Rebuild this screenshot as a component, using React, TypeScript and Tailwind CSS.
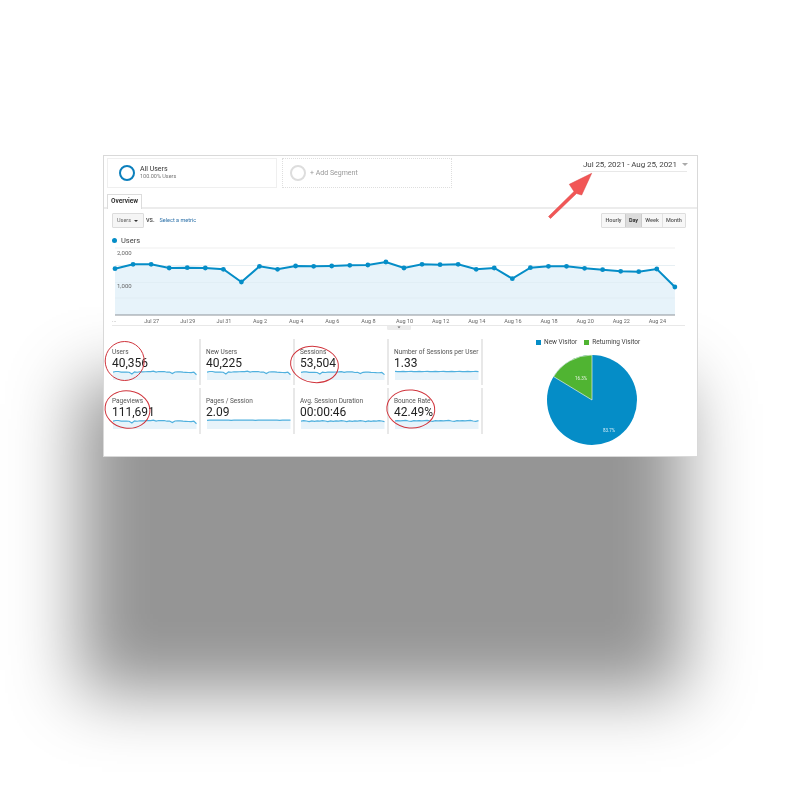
const ys = [268.7,264.3,264.3,268,267.7,268,269.3,282,266.3,269.3,266,266.3,266,265.3,265,262,268,264.3,264.7,264.3,269.3,268,278.7,267.7,266.3,266.3,268.3,269.7,271.3,271.7,269,287];
const xs = ys.map((_, i) => 115 + i * 18.06);
const linePts = ys.map((y, i) => `${xs[i].toFixed(1)},${y}`).join(" ");
const labels = ["Jul 27","Jul 29","Jul 31","Aug 2","Aug 4","Aug 6","Aug 8","Aug 10","Aug 12","Aug 14","Aug 16","Aug 18","Aug 20","Aug 22","Aug 24"];

const sparkFrom = (vals: number[]) => {
  const n = vals.length - 1;
  const pts = vals.map((v, i) => `${((i / n) * 83.5).toFixed(1)},${v.toFixed(2)}`).join(" ");
  return pts;
};
const full = ys.map((y) => 1.2 + (y - 262) * 0.14);
const sessionsShape = ys.map((y) => 1.6 + (y - 262) * 0.12);
const flat = ys.map((_, i) => 1.2 + (i % 9 === 0 ? 0.1 : 0));
const nearFlat = ys.map((_, i) => 1.4 + [0, 0.3, 0.2, 0, 0.3, 0.1][i % 6]);
const wavy = ys.map((_, i) => 1.6 + [0.6, 0, 0.4, 1, 0.2, 0.8, 0.3][i % 7]);
const bounce = ys.map((_, i) => 1.4 + [0.4, 0.2, 0.5, 0.2, 0, 0.6, 1, 0.3][i % 8]);

const metrics = [
  { label: "Users", value: "40,356", s: full },
  { label: "New Users", value: "40,225", s: full },
  { label: "Sessions", value: "53,504", s: sessionsShape },
  { label: "Number of Sessions per User", value: "1.33", s: nearFlat },
  { label: "Pageviews", value: "111,691", s: full },
  { label: "Pages / Session", value: "2.09", s: flat },
  { label: "Avg. Session Duration", value: "00:00:46", s: wavy },
  { label: "Bounce Rate", value: "42.49%", s: bounce },
];

function Spark({ vals }: { vals: number[] }) {
  const pts = sparkFrom(vals);
  return (
    <svg width="84" height="10" viewBox="0 0 84 10" className="block">
      <polygon points={`0,10 ${pts} 83.5,10`} fill="#e7f3fa" />
      <polyline points={pts} fill="none" stroke="#4fb0de" strokeWidth="1.2" />
    </svg>
  );
}

export default function App() {
  return (
    <div className="w-[800px] h-[800px] bg-white overflow-hidden pt-[155px] pl-[103px] font-['Roboto',sans-serif]">
      <div className="relative w-[595px] h-[302px] bg-white border border-[#d9d9d9] shadow-[-19px_231px_65px_5px_#959595]">
        <div className="blur-[0.45px]">
          <div className="flex pt-[2px] pl-[3px] h-[32px]">
            <div className="w-[170px] h-[30px] border border-[#efefef] flex items-center pl-[11px]">
              <div className="w-[16px] h-[16px] rounded-full border-2 border-[#0b7fbc]" />
              <div className="ml-[5px] -mt-[2px]">
                <div className="text-[7px] leading-[8px] text-[#333]">All Users</div>
                <div className="text-[5.5px] leading-[6px] text-[#777]">100.00% Users</div>
              </div>
            </div>
            <div className="ml-[5px] w-[170px] h-[30px] border border-dotted border-[#dedede] flex items-center pl-[7px]">
              <div className="w-[16px] h-[16px] rounded-full border-2 border-[#dddddd]" />
              <span className="ml-[4px] text-[7px] text-[#999]">+ Add Segment</span>
            </div>
            <div className="ml-auto mr-[10px] w-[106px] h-[14px] border-b border-[#e8e8e8] flex items-center pl-[2px] text-[8px] tracking-[-0.08px] text-[#444] whitespace-nowrap">
              Jul 25, 2021 - Aug 25, 2021
              <span className="ml-[5px] border-x-[3px] border-x-transparent border-t-[3px] border-t-[#aaa]" />
            </div>
          </div>

          <div className="mt-[6px] h-[15px] pl-[3px] border-b-2 border-[#ececec]">
            <div className="w-[35px] h-[15px] bg-white border border-b-0 border-[#dcdcdc] flex items-center justify-center text-[6.5px] font-bold text-[#333]">
              Overview
            </div>
          </div>

          <div className="mt-[4px] h-[15px] flex items-center pl-[8px] pr-[11px]">
            <div className="w-[32px] h-[15px] bg-[#f5f5f5] border border-[#dcdcdc] rounded-[1px] flex items-center pl-[4px] text-[5.5px] text-[#666]">
              Users
              <span className="ml-[3px] border-x-[2px] border-x-transparent border-t-[2px] border-t-[#333]" />
            </div>
            <span className="ml-[2px] -mt-[1px] text-[5.5px] font-bold text-[#555]">VS.</span>
            <span className="ml-[5px] text-[5.5px] text-[#2a6fa8]">Select a metric</span>
            <div className="ml-auto flex h-[15px] border border-[#dedede] rounded-[1px] text-[5.5px] font-medium text-[#555]">
              <div className="w-[23px] flex items-center justify-center bg-[#f7f7f7]">Hourly</div>
              <div className="w-[17px] flex items-center justify-center bg-[#dcdcdc] border-x border-[#cccccc] font-bold text-[#333]">Day</div>
              <div className="w-[21px] flex items-center justify-center bg-[#f7f7f7] border-r border-[#e2e2e2]">Week</div>
              <div className="w-[22px] flex items-center justify-center bg-[#f7f7f7]">Month</div>
            </div>
          </div>

          <div className="mt-[8px] h-[9px] flex items-center pl-[8px] text-[7.5px] text-[#444]">
            <span className="w-[5px] h-[5px] rounded-full bg-[#058dc7]" />
            <span className="ml-[4px]">Users</span>
          </div>

          <svg width="593" height="85" viewBox="104 245 593 85" className="block">
            {[248, 265.5, 282.5, 298].map((y, i) => (
              <line key={y} x1="115" x2="675" y1={y} y2={y} stroke={i % 2 ? "#f5f5f5" : "#efefef"} strokeWidth="1" />
            ))}
            <polygon points={`115,315 ${linePts} 675,315`} fill="#e7f3fa" />
            {[265.5, 282.5, 298].map((y) => (
              <line key={y} x1="115" x2="675" y1={y} y2={y} stroke="#deebf2" strokeWidth="0.6" />
            ))}
            <line x1="115" x2="675" y1="315" y2="315" stroke="#8d9499" strokeWidth="1.2" />
            <polyline points={linePts} fill="none" stroke="#058dc7" strokeWidth="2" />
            {ys.map((y, i) => (
              <circle key={i} cx={xs[i]} cy={y} r="2.4" fill="#058dc7" />
            ))}
            <text x="117" y="255" fontSize="6" fill="#666">2,000</text>
            <text x="117" y="288" fontSize="6" fill="#666">1,000</text>
            <text x="112" y="322" fontSize="5.5" fill="#888">...</text>
            {labels.map((l, i) => (
              <text key={l} x={151.7 + i * 36.12} y="322.5" fontSize="5.5" fill="#666" textAnchor="middle">{l}</text>
            ))}
            <line x1="112" x2="685" y1="325.5" y2="325.5" stroke="#e8e8e8" strokeWidth="1" />
            <path d="M387 326h24v2.5a1.5 1.5 0 0 1-1.5 1.5h-21a1.5 1.5 0 0 1-1.5-1.5z" fill="#ececec" />
            <path d="M397.5 326.5h3l-1.5 1.7z" fill="#666" />
          </svg>

          <div className="mt-[9px] flex items-start pl-[3px]">
            <div className="grid grid-cols-[94px_94px_94px_94px] gap-y-[3px]">
              {metrics.map((m) => (
                <div key={m.label} className="h-[46px] pl-[5px] pt-[9px] border-r-2 border-[#e8e8e8] text-[#333]">
                  <div className="text-[6.5px] leading-[8px] text-[#555] whitespace-nowrap">{m.label}</div>
                  <div className="text-[12px] leading-[14px] text-[#222] whitespace-nowrap">{m.value}</div>
                  <div className="pl-[0.5px]">
                    <Spark vals={m.s} />
                  </div>
                </div>
              ))}
            </div>
            <div className="flex flex-col">
              <div className="h-[7px] pl-[53px] flex items-center text-[6.5px] text-[#444] whitespace-nowrap">
                <span className="w-[5px] h-[5px] bg-[#058dc7]" />
                <span className="ml-[3px]">New Visitor</span>
                <span className="ml-[7px] w-[5px] h-[5px] bg-[#50b432]" />
                <span className="ml-[3px]">Returning Visitor</span>
              </div>
              <svg width="92" height="92" viewBox="0 0 92 92" className="block ml-[62.5px] mt-[8px]">
                <circle cx="46" cy="46" r="45" fill="#058dc7" />
                <path d="M46 46 L46 1 A45 45 0 0 0 7.6 22.6 Z" fill="#50b432" stroke="#e8f0e4" strokeWidth="0.7" />
                <text x="35" y="26" fontSize="4.5" fill="#eaf5e4" textAnchor="middle">16.3%</text>
                <text x="63" y="78" fontSize="4.5" fill="#d8eef8" textAnchor="middle">83.7%</text>
              </svg>
            </div>
          </div>
        </div>

        <svg width="595" height="302" viewBox="103 155 595 302" className="absolute left-[-1px] top-[-1px] pointer-events-none">
          <g fill="none" stroke="#d0343c" strokeWidth="1">
            <ellipse cx="124.7" cy="361" rx="19.5" ry="19.5" />
            <ellipse cx="314.5" cy="364.5" rx="24" ry="18" transform="rotate(8 314.5 364.5)" />
            <ellipse cx="127.5" cy="409.5" rx="22.5" ry="18.7" transform="rotate(8 127.5 409.5)" />
            <ellipse cx="410.8" cy="409" rx="24" ry="19" transform="rotate(5 410.8 409)" />
          </g>
          <path d="M548.5 216.5 L574 191.5 L569.3 184.3 L591.7 173.3 L581.7 195 L576.5 193.5 L550.5 218.5 Z" fill="#f25656" stroke="#d84545" strokeWidth="0.5" />
        </svg>
      </div>
    </div>
  );
}
